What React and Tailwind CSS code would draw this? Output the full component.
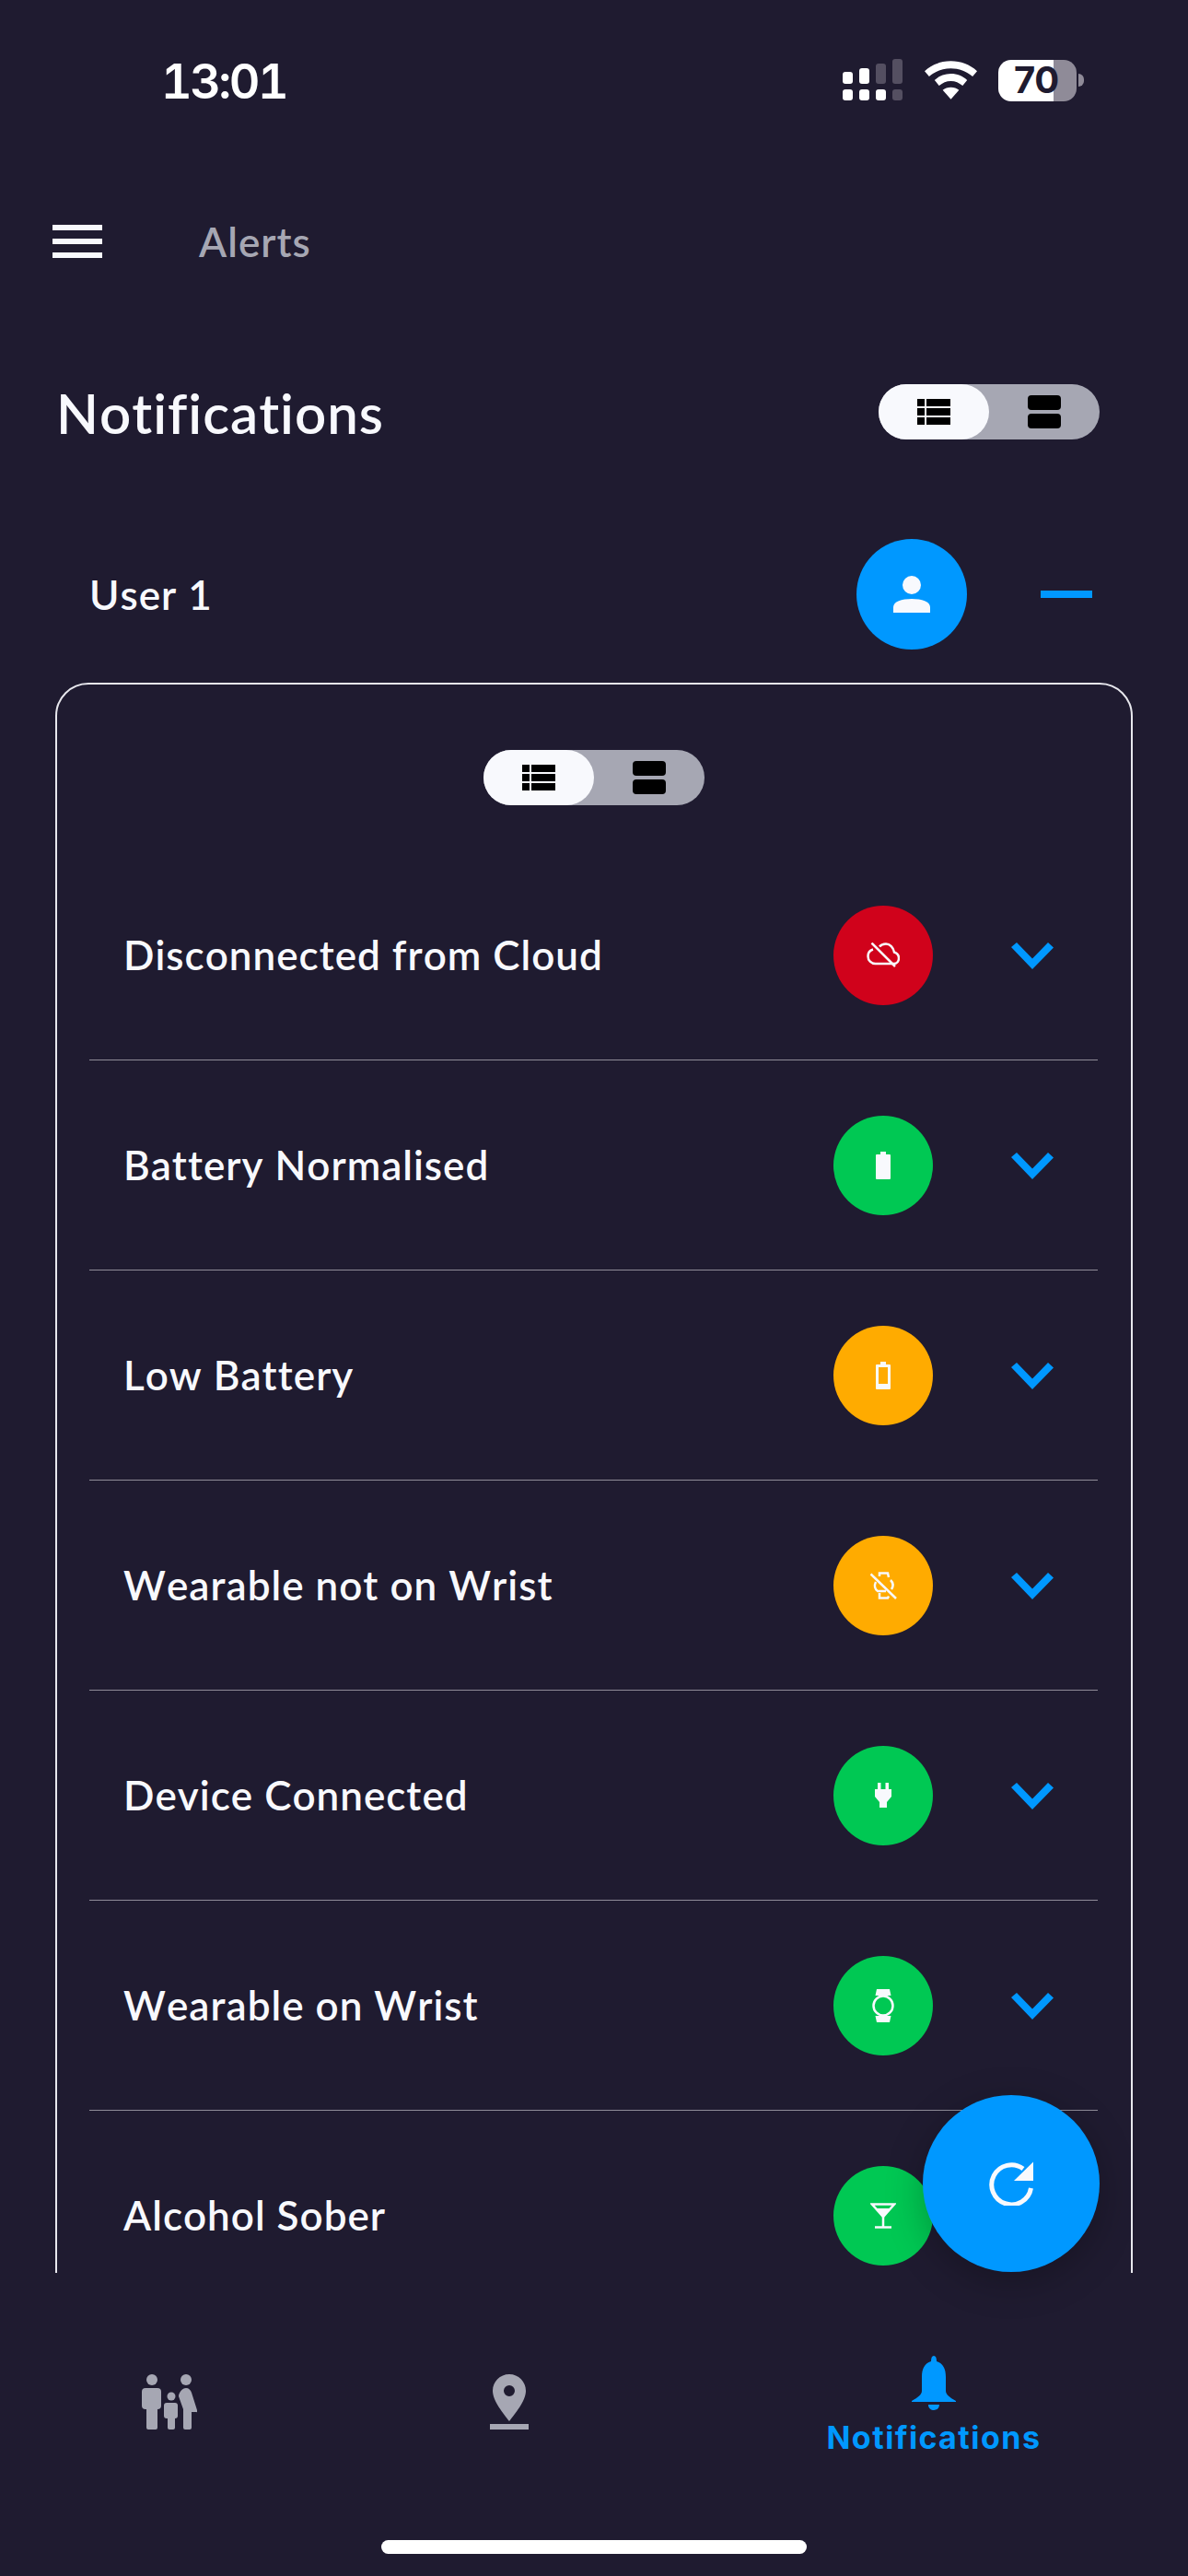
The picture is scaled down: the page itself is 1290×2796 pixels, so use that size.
import React from "react";

const rows = [
  { title: "Disconnected from Cloud", color: "bg-[#d0021b]", icon: "cloud" },
  { title: "Battery Normalised", color: "bg-[#00c853]", icon: "batteryFull" },
  { title: "Low Battery", color: "bg-[#ffab00]", icon: "batteryLow" },
  { title: "Wearable not on Wrist", color: "bg-[#ffab00]", icon: "watchOff" },
  { title: "Device Connected", color: "bg-[#00c853]", icon: "plug" },
  { title: "Wearable on Wrist", color: "bg-[#00c853]", icon: "watch" },
  { title: "Alcohol Sober", color: "bg-[#00c853]", icon: "martini" },
];

const RowIcon = ({ name }) => {
  if (name === "cloud") {
    return (
      <svg width="36" height="27" viewBox="0 0 36 27" fill="none" stroke="#f8f9fd" strokeWidth="2.500">
        <path d="M7 7.500C3.500 8.500 1.500 11.500 1.500 15c0 4.500 3.500 8 8 8h20c3.500 0 5.500-3 5.500-6 0-3-2-5.500-5-6.500C29 5.500 25.500 1.500 21 1.500c-3 0-5.500 1-7 3" />
        <path d="M5.500 0.500l25.500 25.500" />
      </svg>
    );
  }
  if (name === "batteryFull" || name === "batteryLow") {
    return (
      <svg width="16" height="30" viewBox="0 0 16 30">
        <path
          fillRule="evenodd"
          fill="#f8f9fd"
          d={
            name === "batteryFull"
              ? "M5 0h6v3h4a1 1 0 0 1 1 1v25a1 1 0 0 1-1 1H1a1 1 0 0 1-1-1V4a1 1 0 0 1 1-1h4z"
              : "M5 0h6v3h4a1 1 0 0 1 1 1v25a1 1 0 0 1-1 1H1a1 1 0 0 1-1-1V4a1 1 0 0 1 1-1h4zM3 6v18h10V6z"
          }
        />
      </svg>
    );
  }
  if (name === "watchOff") {
    return (
      <svg width="29" height="30" viewBox="0 0 29 30" fill="none" stroke="#f8f9fd" strokeWidth="2.500">
        <path d="M10 5V1.500h9l1 4.500" />
        <path d="M22 9c3 3 3 7 1 10" />
        <path d="M6 11c-2 4-1 8 2 10h9" />
        <path d="M10 23v5.500h9l1-2" />
        <path d="M0.500 2.500l27.500 26.500" />
      </svg>
    );
  }
  if (name === "plug") {
    return (
      <svg width="18" height="27" viewBox="0 0 18 27" fill="#f8f9fd">
        <path d="M3 0h3.500v7H3zM11.500 0H15v7h-3.500zM0 7h18v8l-5 6v6H5v-6l-5-6z" />
      </svg>
    );
  }
  if (name === "watch") {
    return (
      <svg width="24" height="36" viewBox="0 0 24 36">
        <path fill="#f8f9fd" d="M5 0h14l1.500 7H3.500zM3.500 29h17L19 36H5z" />
        <circle cx="12" cy="18" r="10.500" fill="none" stroke="#f8f9fd" strokeWidth="2.500" />
      </svg>
    );
  }
  return (
    <svg width="28" height="28" viewBox="0 0 28 28" fill="none" stroke="#f8f9fd" strokeWidth="2.500">
      <path d="M2 1.500h24L14 15z" />
      <path d="M6 6h16l-8 9z" fill="#f8f9fd" stroke="none" />
      <path d="M14 15v11M5 26.500h18" />
    </svg>
  );
};

// Pill switch used for list / card density
const ViewToggle = () => (
  <div className="w-[240px] h-[60px] rounded-full bg-[#a6a7b3] flex">
    <div className="w-[120px] h-full rounded-full bg-[#f8f9fd] flex items-center justify-center">
      <svg width="36" height="28" viewBox="0 0 36 28" fill="#000">
        <path d="M0 0h8v8H0zM10 0h26v8H10zM0 10h8v8H0zM10 10h26v8H10zM0 20h8v8H0zM10 20h26v8H10z" />
      </svg>
    </div>
    <div className="w-[120px] h-full flex items-center justify-center">
      <svg width="36" height="36" viewBox="0 0 36 36" fill="#000">
        <rect width="36" height="16" rx="4" />
        <rect y="20" width="36" height="16" rx="4" />
      </svg>
    </div>
  </div>
);

const StatusBar = () => (
  <div className="h-[172px] flex items-start justify-between pt-[62px] pl-[175px] pr-[113px] shrink-0">
    <span className="text-[52px] leading-[54px] font-semibold text-white font-['Inter',sans-serif] tabular-nums tracking-[-2.5px]">13:01</span>
    <div className="flex items-center gap-[23px] pt-[2px]">
      <svg width="66" height="46" viewBox="0 0 66 46">
        <g fill="#fff">
          <rect x="0" y="14" width="11" height="13" rx="3" />
          <rect x="18" y="10" width="11" height="17" rx="3" />
          <rect x="0" y="33" width="11" height="12" rx="3" />
          <rect x="18" y="33" width="11" height="12" rx="3" />
          <rect x="36" y="33" width="11" height="12" rx="3" />
        </g>
        <g fill="#544f61">
          <rect x="36" y="5" width="11" height="22" rx="3" />
          <rect x="54" y="0" width="11" height="27" rx="3" />
          <rect x="54" y="33" width="11" height="12" rx="3" />
        </g>
      </svg>
      <svg width="57" height="42" viewBox="0 0 58 42" fill="#fff">
        <path d="M29 0c11 0 21 4 29 11l-5 6C46 11 38 8 29 8S12 11 5 17L0 11C8 4 18 0 29 0z" />
        <path d="M29 14c7 0 13 2.500 18 7l-5 6c-4-3-8-5-13-5s-9 2-13 5l-5-6c5-4.500 11-7 18-7z" />
        <path d="M29 29c3.500 0 6.500 1 9 3L29 42l-9-10c2.500-2 5.500-3 9-3z" />
      </svg>
      <div className="flex items-center gap-[2px]">
        <div className="w-[85px] h-[45px] rounded-[14px] bg-[linear-gradient(90deg,#ffffff_60px,#8f8b98_60px)] pl-[17px] flex items-center text-[40px] leading-none font-bold tracking-[-1px] text-[#1f1b30] font-['Inter',sans-serif]">70</div>
        <div className="w-[6px] h-[14px] rounded-r-full bg-[#8f8b98]" />
      </div>
    </div>
  </div>
);

const AlertRow = ({ title, color, icon }) => (
  <div className="ml-[35px] mr-[36px] h-[228px] shrink-0 flex items-center pl-[37px] border-b border-[#8f8c98]">
    <span className="flex-1 pb-[2px] text-[44px] font-semibold tracking-[1px] [font-kerning:none] text-[#f8f9fd] font-['Lato',sans-serif]">{title}</span>
    <div className={`w-[108px] h-[108px] rounded-full flex items-center justify-center ${color}`}>
      <RowIcon name={icon} />
    </div>
    <div className="w-[179px] pl-[85px] pt-[2px]">
      <svg className="block" width="46" height="29" viewBox="0 0 46 29" fill="#0098ff">
        <path d="M0 5l6-5 17 17.500L40 0l6 5.500L23 29z" />
      </svg>
    </div>
  </div>
);

const BottomNav = () => (
  <div className="h-[329px] relative shrink-0">
    <div className="flex h-[230px]">
      <div className="w-[368px] pt-[110px] flex justify-center">
        <svg width="60" height="60" viewBox="0 0 60 60" fill="#a6a7b3">
          <circle cx="11" cy="6" r="6" />
          <circle cx="48" cy="6" r="6" />
          <circle cx="32" cy="24" r="4.500" />
          <rect x="0" y="15" width="21" height="23" rx="4" />
          <rect x="5" y="30" width="12" height="30" rx="2" />
          <rect x="24" y="31" width="15" height="17" rx="3" />
          <rect x="28" y="40" width="8" height="20" rx="2" />
          <path d="M48 15c3 0 5 2 6 5l6 19a1 1 0 0 1-1 2h-5v17a2 2 0 0 1-2 2h-5a2 2 0 0 1-2-2V38L40 24c0-4 4-9 8-9z" />
        </svg>
      </div>
      <div className="w-[370px] pt-[110px] flex justify-center">
        <svg width="42" height="60" viewBox="0 0 42 60" fill="#a6a7b3">
          <path fillRule="evenodd" d="M21 0c10 0 18 8 18 18 0 11-12 25-18 33C15 43 3 29 3 18 3 8 11 0 21 0zm0 12a6 6 0 1 0 0 12 6 6 0 0 0 0-12z" />
          <path d="M0 54h42v6H0z" />
        </svg>
      </div>
      <div className="flex-1 pt-[90px] flex flex-col items-center">
        <svg width="48" height="60" viewBox="0 0 48 60" fill="#0098ff">
          <path d="M24 0c2 0 3 2 3 6 7 2 10 8 10 17v15c0 4 4 7 11 11v1H0v-1c7-4 11-7 11-11V23c0-9 3-15 10-17 0-4 1-6 3-6z" />
          <path d="M18 53h12c0 4-3 6-6 6s-6-2-6-6z" />
        </svg>
        <span className="mt-[10px] text-[34px] leading-[38px] font-bold tracking-[1.5px] text-[#0098ff] font-['Inter',sans-serif]">Notifications</span>
      </div>
    </div>
    <div className="absolute left-[414px] top-[290px] w-[462px] h-[15px] rounded-full bg-white" />
  </div>
);

export default function App() {
  return (
    <div className="relative w-[1290px] h-[2796px] bg-[#1f1b30] flex flex-col overflow-hidden font-['Lato',sans-serif] [font-kerning:none]">
      <StatusBar />
      <div className="h-[180px] shrink-0 flex items-center pl-[57px] gap-[105px]">
        <div className="w-[54px] flex flex-col gap-[9px]">
          <div className="h-[6px] bg-[#f8f9fd]" />
          <div className="h-[6px] bg-[#f8f9fd]" />
          <div className="h-[6px] bg-[#f8f9fd]" />
        </div>
        <span className="text-[44px] font-semibold tracking-[1px] text-[#a6a7b3]">Alerts</span>
      </div>

      <div className="h-[190px] shrink-0 flex items-center justify-between pl-[61px] pr-[96px]">
        <h1 className="pt-[2px] text-[60px] font-semibold tracking-[1px] text-[#f8f9fd]">Notifications</h1>
        <ViewToggle />
      </div>

      <div className="flex-1 min-h-0 relative">
        <div className="h-full overflow-hidden">
          <div className="h-[120px] mt-[43px] flex items-center pl-[97px] pr-[104px]">
            <span className="flex-1 text-[44px] font-semibold tracking-[1px] text-[#f8f9fd]">User 1</span>
            <div className="w-[120px] h-[120px] rounded-full bg-[#0098ff] flex items-center justify-center">
              <svg width="40" height="40" viewBox="0 0 40 40" fill="#f8f9fd">
                <circle cx="20" cy="10" r="10" />
                <path d="M0 40v-6c0-6 9-9 20-9s20 3 20 9v6z" />
              </svg>
            </div>
            <div className="w-[56px] h-[8px] ml-[80px] bg-[#0098ff]" />
          </div>

          <div className="mx-[60px] mt-[36px] border-2 border-[#e8e8ee] rounded-[36px] flex flex-col">
            <div className="h-[180px] flex justify-center pt-[71px] shrink-0">
              <ViewToggle />
            </div>
            {rows.map((row) => (
              <AlertRow key={row.title} {...row} />
            ))}
          </div>
        </div>

        <button className="absolute left-[1002px] bottom-[1px] w-[192px] h-[192px] rounded-full bg-[#0098ff] shadow-[0_10px_40px_rgba(0,0,0,0.25)] flex items-center justify-center">
          <svg width="48" height="48" viewBox="0 0 48 48" fill="none">
            <path d="M45.500 29A21.500 21.500 0 1 1 37 8" stroke="#f8f9fd" strokeWidth="5" />
            <path d="M48 0.500V21H27z" fill="#f8f9fd" />
          </svg>
        </button>
      </div>

      <BottomNav />
    </div>
  );
}
